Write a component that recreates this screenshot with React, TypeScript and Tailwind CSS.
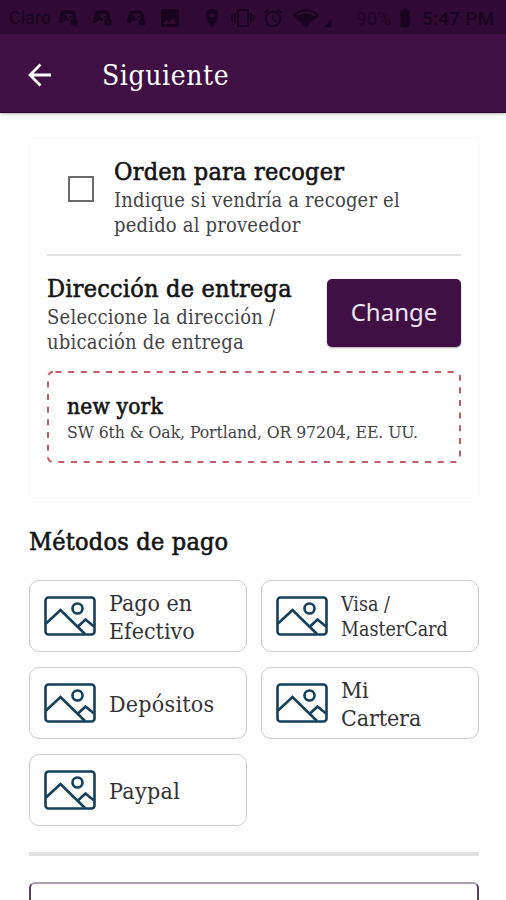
import type { ReactNode } from 'react';
import { clsx } from 'clsx';
import { MdAlarm, MdBatteryFull, MdImage, MdLocationOn, MdNetworkWifi, MdSignalCellular4Bar, MdVibration } from 'react-icons/md';

type Method = {
  id: string;
  lines: string[];
  className: string;
};

const methods: Method[] = [
  { id: 'cash', lines: ['Pago en', 'Efectivo'], className: 'text-[23px] leading-[28px]' },
  { id: 'card', lines: ['Visa /', 'MasterCard'], className: 'text-[19.5px] leading-[25px]' },
  { id: 'deposit', lines: ['Depósitos'], className: 'text-[23px] leading-[28px] tracking-[0.25px]' },
  { id: 'wallet', lines: ['Mi', 'Cartera'], className: 'text-[23px] leading-[28px] tracking-[-0.1px]' },
  { id: 'paypal', lines: ['Paypal'], className: 'text-[23px] leading-[28px] tracking-[0.35px]' },
];

function GamepadIcon() {
  return (
    <svg width="21" height="18" viewBox="0 0 21 18" fill="none" stroke="currentColor">
      <path d="M2.500 14 4 6q.5-3 3.500-3h5q3 0 3.500 3l.5 3" strokeWidth="3.5" />
      <path d="M5 8h4M7 6v4M11.500 8h2.500" strokeWidth="1.8" />
      <path d="M3 13l3-2.500h5" strokeWidth="2.5" />
      <circle cx="16" cy="13" r="3" fill="currentColor" strokeWidth="1.5" />
    </svg>
  );
}

function StatusBar() {
  return (
    <div className="flex h-[34px] items-center bg-[#300a34] pt-[2px] font-['Roboto',sans-serif] text-[18px] leading-none text-[#190320]">
      <span className="ml-[9px] w-[49px]">Claro</span>
      <div className="flex w-[99px] gap-[13px]">
        <GamepadIcon />
        <GamepadIcon />
        <GamepadIcon />
      </div>
      <MdImage size={24} className="ml-px" />
      <MdLocationOn size={22} className="ml-[19px]" />
      <MdVibration size={24} className="ml-[8px]" />
      <MdAlarm size={22} className="ml-[7px]" />
      <MdNetworkWifi size={26} className="ml-[9px]" />
      <MdSignalCellular4Bar size={9} className="mt-[10px] ml-[4px]" />
      <span className="ml-[24px] w-[38px] text-[19px] text-[#1f0626]">90%</span>
      <MdBatteryFull size={22} />
      <span className="ml-[6px] text-[19px] whitespace-nowrap font-medium tracking-[0.2px]">5:47 PM</span>
    </div>
  );
}

function Header() {
  return (
    <header className="flex h-[79px] items-center border-b border-[#2b0730] bg-[#400f43] pt-[3px] pl-[28px] text-white shadow-[0_1px_3px_rgba(0,0,0,0.3)]">
      <svg width="24" height="24" viewBox="0 0 24 24" fill="none" stroke="currentColor" strokeWidth="2.8">
        <path d="M23 12H3M12.5 1.5 2 12l10.5 10.5" />
      </svg>
      <h1 className="ml-[50px] pt-[2px] text-[28px] leading-[34px] tracking-[0.6px]">Siguiente</h1>
    </header>
  );
}

function Title({ children }: { children: ReactNode }) {
  return (
    <h2 className="text-[25px] leading-[30px] tracking-[0.22px] whitespace-nowrap text-[#151515] [-webkit-text-stroke:0.6px_currentColor]">
      {children}
    </h2>
  );
}

function PictureIcon() {
  return (
    <svg width="52" height="40" viewBox="0 0 52 40" fill="none" stroke="#153f5c" strokeWidth="2.6" className="shrink-0">
      <rect x="1.5" y="1.5" width="49" height="37" rx="3" />
      <circle cx="33.5" cy="12.5" r="5" />
      <path d="M2 27.500 16.500 14 41 38M34 30.500l7.500-7L50 30.500" />
    </svg>
  );
}

function PickupCard() {
  return (
    <section className="mt-[25px] mr-[27px] ml-[29px] h-[360px] border border-[#fbfbfb] bg-white px-[17px] pt-[18px]">
      <div className="flex h-[99px] items-start border-b-2 border-[#e3e3e3]">
        <div className="mt-[19px] ml-[21px] size-[26px] border-2 border-[#6b6b6b]" />
        <div className="ml-[20px]">
          <Title>Orden para recoger</Title>
          <p className="mt-px text-[20px] leading-[25px] tracking-[0.18px] whitespace-nowrap text-[#444]">
            Indique si vendría a recoger el
            <br />
            pedido al proveedor
          </p>
        </div>
      </div>
      <div className="flex justify-between pt-[18px]">
        <div>
          <Title>Dirección de entrega</Title>
          <p className="mt-px text-[20px] leading-[25px] tracking-[0.22px] whitespace-nowrap text-[#444]">
            Seleccione la dirección /
            <br />
            ubicación de entrega
          </p>
        </div>
        <button className="mt-[5px] h-[68px] w-[134px] rounded-[5px] bg-[#400f43] pb-[2px] font-['Noto_Sans',sans-serif] text-[24px] text-[#f0e4f2] shadow-[0_1px_2px_rgba(0,0,0,0.35)]">
          Change
        </button>
      </div>
      <div className="relative mt-[16px] h-[92px] pt-[20px] pl-[20px]">
        <svg className="absolute inset-0" width="415" height="92" fill="none" stroke="#c65c68" strokeWidth="2">
          <rect x="1" y="1" width="412" height="90" rx="5" strokeDasharray="6 6.650" strokeDashoffset="-2.500" />
        </svg>
        <h3 className="text-[22.5px] leading-[30px] tracking-[0.2px] whitespace-nowrap text-[#151515] [-webkit-text-stroke:0.6px_currentColor]">new york</h3>
        <p className="text-[17.5px] leading-[22px] tracking-[-0.1px] whitespace-nowrap text-[#444]">SW 6th &amp; Oak, Portland, OR 97204, EE. UU.</p>
      </div>
    </section>
  );
}

function PaymentMethods() {
  return (
    <section className="pt-[29px] pr-[27px] pl-[29px]">
      <Title>Métodos de pago</Title>
      <div className="mt-[23px] grid grid-cols-2 gap-x-[14px] gap-y-[15px]">
        {methods.map((method) => (
          <div key={method.id} className="flex h-[72px] items-center rounded-[10px] border-[1.5px] border-[#cfcfcf] pl-[14px]">
            <PictureIcon />
            <div className={clsx('ml-[13px] pt-[2px] whitespace-nowrap text-[#333]', method.className)}>
              {method.lines.map((line) => (
                <div key={line}>{line}</div>
              ))}
            </div>
          </div>
        ))}
      </div>
    </section>
  );
}

export default function App() {
  return (
    <div className="h-[900px] w-[506px] overflow-hidden bg-[#fefefe] font-['DejaVu_Serif_Condensed','DejaVu_Serif',serif]">
      <StatusBar />
      <Header />
      <PickupCard />
      <PaymentMethods />
      <div className="mt-[26px] mr-[27px] ml-[29px] h-[4px] bg-[#e0e0e0]" />
      <div className="mt-[26px] mr-[27px] ml-[29px] h-[60px] rounded-[6px] border-2 border-[#5a3f5f] border-t-[#aaa0ab]" />
    </div>
  );
}
